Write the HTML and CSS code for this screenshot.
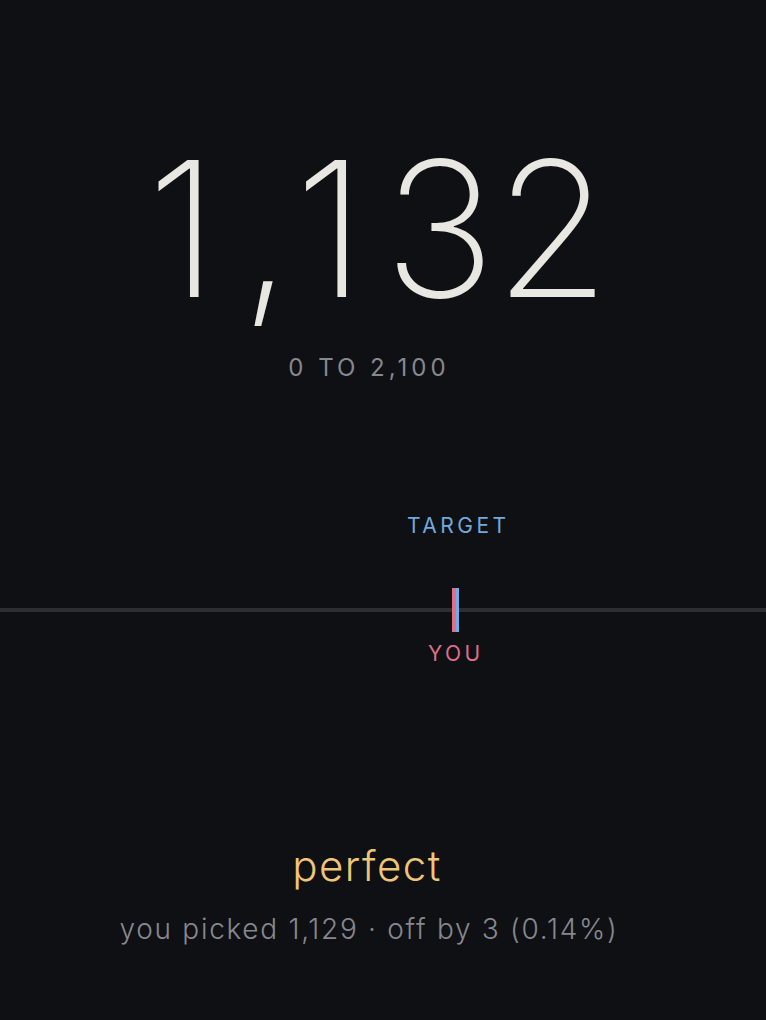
FILE: index.html
```html
<!DOCTYPE html>
<html lang="en">
<head>
<meta charset="utf-8">
<title>Guess result</title>
<link rel="stylesheet" href="styles.css">
</head>
<body>
<main class="page">
  <section class="hero">
    <div class="big-number"><span class="sp-a">1</span><span class="sp-b">,</span><span class="sp-c">1</span>32</div>
    <div class="range">0 TO 2,100</div>
  </section>

  <section class="scale">
    <div class="label-row">
      <span class="marker-label target-label" style="left: 59.6%">TARGET</span>
    </div>
    <div class="track">
      <div class="track-line"></div>
      <div class="bar you-bar" style="left: 452px"></div>
      <div class="bar target-bar" style="left: 456px"></div>
    </div>
    <div class="label-row">
      <span class="marker-label you-label" style="left: 59.27%">YOU</span>
    </div>
  </section>

  <section class="result">
    <div class="verdict">perfect</div>
    <div class="detail">you picked 1,129 · off by 3 (0.14%)</div>
  </section>
</main>
</body>
</html>
```

FILE: styles.css
```css
html, body {
  margin: 0;
  padding: 0;
  background: #0f1014;
  height: 100%;
}

body {
  font-family: Inter, "Noto Sans", "Liberation Sans", sans-serif;
  color: #e9e7e2;
}

.page {
  display: flex;
  flex-direction: column;
  align-items: stretch;
  width: 766px;
  min-height: 1020px;
}

.hero {
  display: flex;
  flex-direction: column;
  align-items: center;
  padding-top: 135px;
}

.big-number {
  font-size: 188px;
  line-height: 1;
  font-weight: 200;
  color: #e9e7e2;
  letter-spacing: -1px;
  margin-right: 10px;
}

.sp-a {
  letter-spacing: 22px;
}

.sp-b {
  letter-spacing: 2px;
}

.sp-c {
  letter-spacing: 18px;
}

.range {
  margin-top: 33px;
  margin-right: 32px;
  font-size: 24px;
  line-height: 1;
  font-weight: 400;
  color: #86888e;
  letter-spacing: 4px;
  padding-left: 4px;
}

.scale {
  display: flex;
  flex-direction: column;
  margin-top: 135px;
}

.label-row {
  position: relative;
  height: 21px;
}

.marker-label {
  position: absolute;
  top: 0;
  transform: translateX(-50%);
  font-size: 21px;
  line-height: 1;
  letter-spacing: 3.5px;
  padding-left: 3.5px;
  white-space: nowrap;
}

.target-label {
  color: #72a9de;
}

.you-label {
  color: #de6f8a;
}

.track {
  position: relative;
  height: 44px;
  margin-top: 52px;
  margin-bottom: 11px;
}

.track-line {
  position: absolute;
  left: 0;
  right: 0;
  top: 20px;
  height: 4px;
  background: #2d2e34;
}

.bar {
  position: absolute;
  top: 0;
  height: 44px;
}

.you-bar {
  width: 4px;
  background: #e0708a;
}

.target-bar {
  width: 3px;
  background: #74abe2;
}

.result {
  display: flex;
  flex-direction: column;
  align-items: center;
  margin-top: 181px;
  padding-right: 32px;
}

.verdict {
  font-size: 42px;
  line-height: 1;
  font-weight: 300;
  color: #f0c674;
  letter-spacing: 1.5px;
}

.detail {
  margin-top: 28px;
  margin-left: 4px;
  font-size: 28px;
  line-height: 1;
  font-weight: 300;
  color: #86888e;
  letter-spacing: 1.7px;
}
```
